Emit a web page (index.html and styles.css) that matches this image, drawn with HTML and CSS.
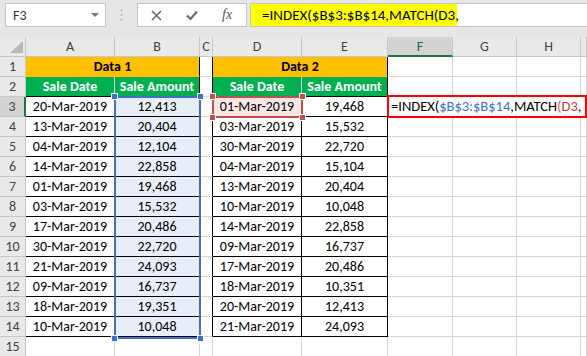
FILE: index.html
```html
<!DOCTYPE html>
<html lang="en">
<head>
  <meta charset="UTF-8" />
  <title>INDEX MATCH</title>
  <link rel="stylesheet" href="styles.css">
</head>
<body>
  <div class="top">
    <div class="namebox"><span>F3</span><i class="caret"></i></div>
    <div class="grip">
      <svg width="3" height="12" viewBox="0 0 3 12"><circle cx="1.5" cy="1.5" r="1" /><circle cx="1.5" cy="6" r="1" /><circle cx="1.5" cy="10.5" r="1" /></svg>
    </div>
    <div class="btns">
      <svg width="11" height="11" viewBox="0 0 11 11"><path d="M1 1 L10 10 M10 1 L1 10" /></svg>
      <svg width="12" height="11" viewBox="0 0 12 11"><path d="M1 5.5 L4.5 9 L11 1.5" /></svg>
      <span class="fx">fx</span>
    </div>
    <div class="formula"><span class="hl">=INDEX($B$3:$B$14,MATCH(D3,</span></div>
  </div>

  <div class="sheet">
    <div class="corner"><i class="tri"></i></div>
    <div class="hd">A</div><div class="hd">B</div><div class="hd">C</div><div class="hd">D</div><div class="hd">E</div>
    <div class="hd on">F</div><div class="hd">G</div><div class="hd">H</div><div class="hd"></div>

    <div class="rh">1</div><div class="title">Data 1</div><div class="gap"></div><div class="title">Data 2</div>
    <div></div><div></div><div></div><div></div>

    <div class="rh">2</div><div class="head">Sale Date</div><div class="head last">Sale Amount</div><div class="gap"></div>
    <div class="head">Sale Date</div><div class="head last">Sale Amount</div><div></div><div></div><div></div><div></div>

    <div class="rh on">3</div><div class="t">20-Mar-2019</div><div class="t pick">12,413</div><div class="gap"></div>
    <div class="t ref">01-Mar-2019</div><div class="t">19,468</div><div></div><div></div><div></div><div></div>

    <div class="rh">4</div><div class="t">13-Mar-2019</div><div class="t pick">20,404</div><div class="gap"></div>
    <div class="t">03-Mar-2019</div><div class="t">15,532</div><div></div><div></div><div></div><div></div>

    <div class="rh">5</div><div class="t">04-Mar-2019</div><div class="t pick">12,104</div><div class="gap"></div>
    <div class="t">30-Mar-2019</div><div class="t">22,720</div><div></div><div></div><div></div><div></div>

    <div class="rh">6</div><div class="t">14-Mar-2019</div><div class="t pick">22,858</div><div class="gap"></div>
    <div class="t">04-Mar-2019</div><div class="t">15,104</div><div></div><div></div><div></div><div></div>

    <div class="rh">7</div><div class="t">01-Mar-2019</div><div class="t pick">19,468</div><div class="gap"></div>
    <div class="t">13-Mar-2019</div><div class="t">20,404</div><div></div><div></div><div></div><div></div>

    <div class="rh">8</div><div class="t">03-Mar-2019</div><div class="t pick">15,532</div><div class="gap"></div>
    <div class="t">10-Mar-2019</div><div class="t">10,048</div><div></div><div></div><div></div><div></div>

    <div class="rh">9</div><div class="t">17-Mar-2019</div><div class="t pick">20,486</div><div class="gap"></div>
    <div class="t">14-Mar-2019</div><div class="t">22,858</div><div></div><div></div><div></div><div></div>

    <div class="rh">10</div><div class="t">30-Mar-2019</div><div class="t pick">22,720</div><div class="gap"></div>
    <div class="t">09-Mar-2019</div><div class="t">16,737</div><div></div><div></div><div></div><div></div>

    <div class="rh">11</div><div class="t">21-Mar-2019</div><div class="t pick">24,093</div><div class="gap"></div>
    <div class="t">17-Mar-2019</div><div class="t">20,486</div><div></div><div></div><div></div><div></div>

    <div class="rh">12</div><div class="t">09-Mar-2019</div><div class="t pick">16,737</div><div class="gap"></div>
    <div class="t">18-Mar-2019</div><div class="t">10,351</div><div></div><div></div><div></div><div></div>

    <div class="rh">13</div><div class="t">18-Mar-2019</div><div class="t pick">19,351</div><div class="gap"></div>
    <div class="t">20-Mar-2019</div><div class="t">12,413</div><div></div><div></div><div></div><div></div>

    <div class="rh">14</div><div class="t">10-Mar-2019</div><div class="t pick">10,048</div><div class="gap"></div>
    <div class="t">21-Mar-2019</div><div class="t">24,093</div><div></div><div></div><div></div><div></div>

    <div class="rh">15</div><div></div><div></div><div></div><div></div><div></div><div></div><div></div><div></div><div></div>

    <!-- range highlights drawn over the cells -->
    <div class="sel"><i class="h tl"></i><i class="h tr"></i><i class="h bl"></i><i class="h br"></i></div>
    <div class="refbox"><i class="h tl"></i><i class="h tr"></i><i class="h bl"></i><i class="h br"></i></div>
    <div class="edit">=INDEX(<span class="r1">$B$3:$B$14</span>,MATCH<span class="p">(</span><span class="r2">D3</span>,</div>
  </div>
</body>
</html>
```

FILE: styles.css
```css
body {
  margin: 0;
  width: 587px;
  height: 356px;
  overflow: hidden;
  background: #fff;
  font-family: Carlito, "Liberation Sans", sans-serif;
  font-size: 14px;
  color: #000;
}
.top {
  display: flex;
  align-items: flex-start;
  height: 37px;
  box-sizing: border-box;
  padding: 3px 0 0 5px;
  background: #e6e6e6;
}
.namebox {
  width: 101px;
  height: 24px;
  box-sizing: border-box;
  border: 1px solid #c6c6c6;
  background: #fff;
  display: flex;
  align-items: center;
  justify-content: space-between;
  padding: 0 6px 0 7px;
  color: #333;
}
.caret {
  width: 0;
  height: 0;
  border-left: 4px solid transparent;
  border-right: 4px solid transparent;
  border-top: 4px solid #777;
}
.grip {
  width: 31px;
  height: 24px;
  display: flex;
  align-items: center;
  justify-content: center;
}
.grip svg {
  fill: #b4b4b4;
}
.btns {
  width: 110px;
  height: 24px;
  box-sizing: border-box;
  border: 1px solid #c6c6c6;
  background: #fff;
  display: flex;
  align-items: center;
  gap: 24px;
  padding-left: 13px;
}
.btns svg {
  fill: none;
  stroke: #6b6b6b;
  stroke-width: 1.6;
}
.btns svg + svg {
  stroke-width: 2.2;
}
.fx {
  font-family: "Liberation Serif", serif;
  font-style: italic;
  font-size: 14px;
  color: #555;
}
.formula {
  flex: 1;
  height: 24px;
  margin-left: 3px;
  box-sizing: border-box;
  border: 1px solid #c6c6c6;
  border-right: none;
  background: #fff;
}
.hl {
  display: block;
  width: 206px;
  height: 22px;
  box-sizing: border-box;
  padding-left: 11px;
  font-size: 15px;
  line-height: 22px;
  background: #ffff00;
  white-space: nowrap;
}

.sheet {
  position: relative;
  display: grid;
  grid-template-columns: 26px 89px 85px 13px 89px 86px 65px 64px 64px 1fr;
  grid-auto-rows: 20px;
}
.sheet > div {
  box-sizing: border-box;
  border-right: 1px solid #d4d4d4;
  border-bottom: 1px solid #d4d4d4;
  text-align: center;
  line-height: 19px;
  white-space: nowrap;
  overflow: hidden;
}
.sheet > .hd,
.sheet > .rh,
.sheet > .corner {
  background: #e9e9e9;
  color: #444;
  border-color: #c8c8c8;
}
.sheet > .hd.on {
  background: #d3d3d3;
  color: #1e6b41;
  border-bottom: 2px solid #217346;
}
.sheet > .rh.on {
  background: #d3d3d3;
  border-right: 2px solid #217346;
}
.sheet > .corner {
  display: flex;
  align-items: flex-end;
  justify-content: flex-end;
  padding: 0 2px 3px 0;
}
.tri {
  width: 0;
  height: 0;
  border-left: 13px solid transparent;
  border-bottom: 12px solid #b8b8b8;
}
.sheet > .title {
  grid-column: span 2;
  background: #ffc000;
  font-weight: bold;
  border-right-color: #000;
  border-bottom-color: #ffc000;
}
.sheet > .head {
  background: #00b050;
  color: #fff;
  font-weight: bold;
  border-right-color: #dcdcdc;
  border-bottom-color: #000;
}
.sheet > .head.last {
  border-right-color: #000;
}
.sheet > .gap {
  border-right-color: #000;
}
.sheet > .t {
  border-color: #000;
}
.sheet > .pick {
  background: #e8eef8;
}
.sheet > .ref {
  background: #fbe6e6;
}

.sheet > .sel,
.sheet > .refbox,
.sheet > .edit {
  position: absolute;
  overflow: visible;
}
.sheet > .sel {
  grid-column: 3 / 4;
  grid-row: 4 / 16;
  top: -1px;
  bottom: -2px;
  left: -1px;
  right: -1px;
  border: 2px solid #3d6fcc;
}
.sheet > .refbox {
  grid-column: 5 / 6;
  grid-row: 4 / 5;
  top: -1px;
  bottom: -1px;
  left: -1px;
  right: -1px;
  border: 2px solid #c0504d;
}
.h {
  position: absolute;
  width: 5px;
  height: 5px;
  background: #3d6fcc;
  border: 1px solid #fff;
}
.refbox .h {
  background: #c0504d;
}
.h.tl { top: -5px; left: -5px; }
.h.tr { top: -5px; right: -5px; }
.h.bl { bottom: -5px; left: -5px; }
.h.br { bottom: -5px; right: -5px; }
.sheet > .edit {
  grid-column: 7 / 11;
  grid-row: 4 / 5;
  top: -2px;
  bottom: -1px;
  left: -1px;
  right: 0;
  border: 2px solid #ff0000;
  background: #fff;
  text-align: left;
  padding-left: 2px;
  font-size: 14.5px;
  line-height: 18px;
}
.r1 {
  color: #3d6fcc;
}
.p {
  color: #e0507a;
}
.r2 {
  color: #c8343c;
}
```
